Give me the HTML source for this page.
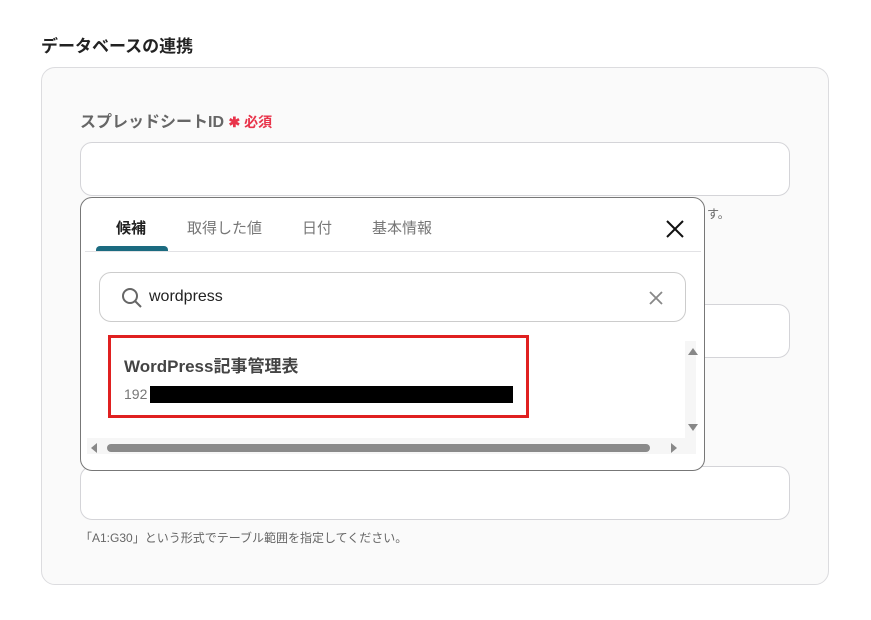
<!DOCTYPE html>
<html><head><meta charset="utf-8"><style>
*{box-sizing:border-box;margin:0;padding:0}
body{width:871px;height:620px;background:#fff;position:relative;font-family:"Liberation Sans","Noto Sans CJK JP",sans-serif;overflow:hidden}
.abs{position:absolute}
.h{left:41px;top:32px;font-size:17px;font-weight:bold;color:#222}
.panel{left:41px;top:67px;width:788px;height:518px;background:#fafafa;border:1px solid #dcdcdf;border-radius:14px}
.lbl{left:80px;top:108px;font-size:16px;color:#666;font-weight:bold}
.req{color:#e8334a;font-size:14px}
.inp{left:80px;width:710px;height:54px;background:#fff;border:1px solid #d4d4d8;border-radius:12px}
.note{font-size:12px;color:#666}
.dd{left:80px;top:197px;width:625px;height:274px;background:#fff;border:1px solid #777;border-radius:12px;overflow:hidden}
.tab{top:217px;font-size:15px;color:#777}
</style></head><body>
<div class="abs h">データベースの連携</div>
<div class="abs panel"></div>
<div class="abs lbl">スプレッドシートID <span class="req">✱ 必須</span></div>
<div class="abs inp" style="top:142px"></div>
<div class="abs note" style="left:707px;top:205px">す。</div>
<div class="abs inp" style="top:304px"></div>
<div class="abs inp" style="top:466px"></div>
<div class="abs note" style="left:80px;top:529px">「A1:G30」という形式でテーブル範囲を指定してください。</div>
<div class="abs dd">
  <div class="abs tab" style="left:35px;top:19px;color:#222;font-weight:bold">候補</div>
  <div class="abs tab" style="left:106px;top:19px">取得した値</div>
  <div class="abs tab" style="left:221px;top:19px">日付</div>
  <div class="abs tab" style="left:291px;top:19px">基本情報</div>
  <div class="abs" style="left:15px;top:48px;width:72px;height:6px;background:#1b6b80;border-radius:4px 4px 0 0"></div>
  <div class="abs" style="left:4px;top:53px;width:616px;height:1px;background:#e2e2e5"></div>
  <svg class="abs" style="left:584px;top:21px" width="20" height="20" viewBox="0 0 20 20"><path d="M2 2L18 18M18 2L2 18" stroke="#111" stroke-width="2"/></svg>
  <div class="abs" style="left:18px;top:74px;width:587px;height:50px;border:1px solid #ccc;border-radius:12px"></div>
  <svg class="abs" style="left:40px;top:89px" width="22" height="22" viewBox="0 0 22 22"><circle cx="9" cy="9" r="7" fill="none" stroke="#666" stroke-width="2"/><path d="M14 14L20 20" stroke="#666" stroke-width="2"/></svg>
  <div class="abs" style="left:68px;top:90px;font-size:16px;color:#222">wordpress</div>
  <svg class="abs" style="left:567px;top:92px" width="16" height="16" viewBox="0 0 16 16"><path d="M2 2L14 14M14 2L2 14" stroke="#888" stroke-width="1.8"/></svg>
  <div class="abs" style="left:6px;top:143px;width:609px;height:113px;background:#f6f6f6"></div>
  <div class="abs" style="left:6px;top:143px;width:598px;height:97px;background:#fff"></div>
  <div class="abs" style="left:27px;top:137px;width:421px;height:83px;border:3px solid #e02020"></div>
  <div class="abs" style="left:43px;top:154px;font-size:17px;font-weight:bold;color:#444">WordPress記事管理表</div>
  <div class="abs" style="left:43px;top:188px;font-size:14px;color:#777">192</div>
  <div class="abs" style="left:69px;top:188px;width:363px;height:17px;background:#000"></div>
  <div class="abs" style="left:607px;top:150px;width:0;height:0;border-left:5px solid transparent;border-right:5px solid transparent;border-bottom:7px solid #888"></div>
  <div class="abs" style="left:607px;top:226px;width:0;height:0;border-left:5px solid transparent;border-right:5px solid transparent;border-top:7px solid #888"></div>
  <div class="abs" style="left:10px;top:245px;width:0;height:0;border-top:5px solid transparent;border-bottom:5px solid transparent;border-right:6px solid #888"></div>
  <div class="abs" style="left:590px;top:245px;width:0;height:0;border-top:5px solid transparent;border-bottom:5px solid transparent;border-left:6px solid #888"></div>
  <div class="abs" style="left:26px;top:246px;width:543px;height:8px;background:#8a8a8a;border-radius:4px"></div>
</div>
</body></html>
